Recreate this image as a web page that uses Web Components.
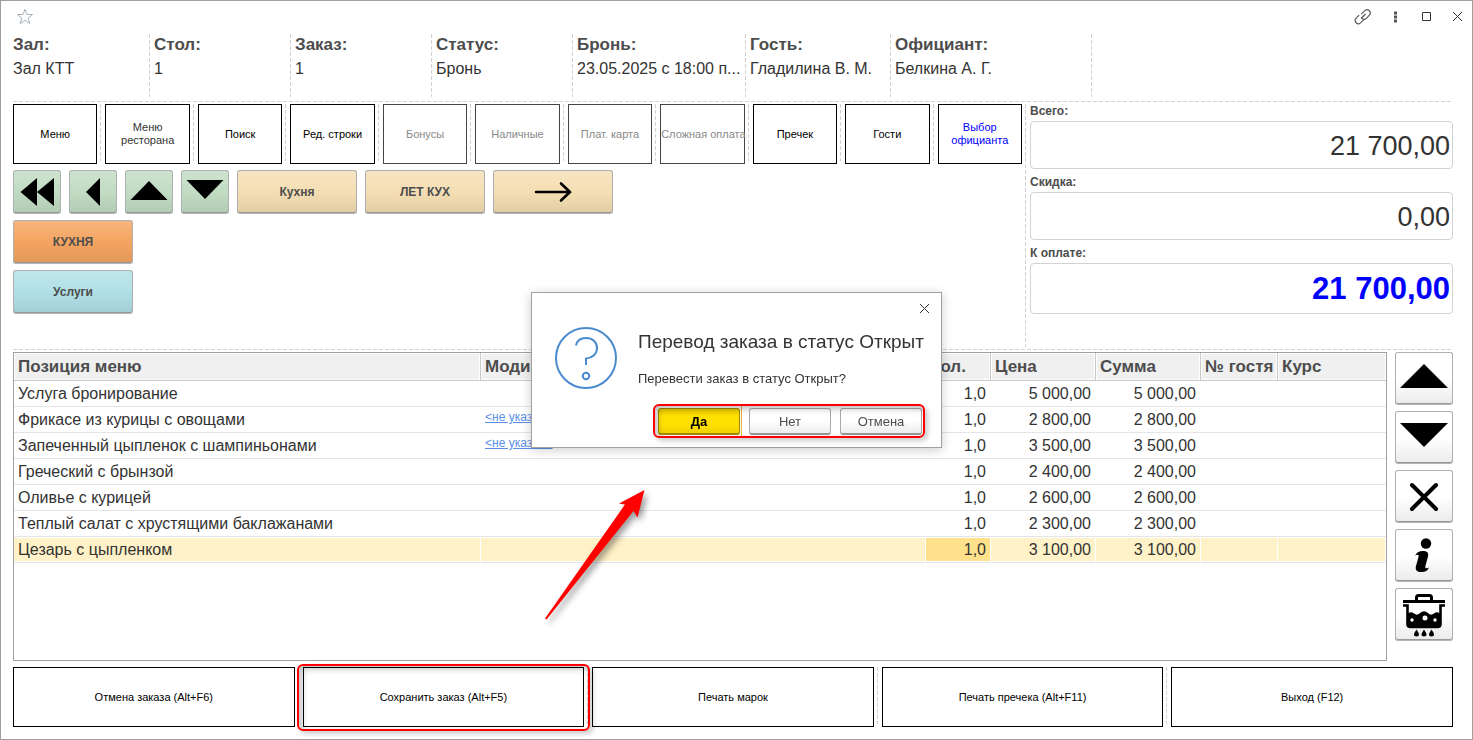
<!DOCTYPE html>
<html lang="ru">
<head>
<meta charset="utf-8">
<title>Заказ</title>
<style>
  html, body { height: 100%; }
  body { margin: 0; font-family: "Liberation Sans", Arial, sans-serif; font-size: 16px; color: #333; background: #fff; }
</style>
</head>
<body>
<order-window>
  <title-bar slot="title"></title-bar>
  <order-info slot="info">
    <info-cell label="Зал:">Зал КТТ</info-cell>
    <info-cell label="Стол:">1</info-cell>
    <info-cell label="Заказ:">1</info-cell>
    <info-cell label="Статус:">Бронь</info-cell>
    <info-cell label="Бронь:">23.05.2025 с 18:00 п...</info-cell>
    <info-cell label="Гость:">Гладилина В. М.</info-cell>
    <info-cell label="Официант:">Белкина А. Г.</info-cell>
  </order-info>
  <button-row slot="actions">
    <flat-button>Меню</flat-button>
    <flat-button tone="soft">Меню<br>ресторана</flat-button>
    <flat-button>Поиск</flat-button>
    <flat-button>Ред. строки</flat-button>
    <flat-button disabled>Бонусы</flat-button>
    <flat-button disabled>Наличные</flat-button>
    <flat-button disabled>Плат. карта</flat-button>
    <flat-button disabled>Сложная оплата</flat-button>
    <flat-button>Пречек</flat-button>
    <flat-button>Гости</flat-button>
    <flat-button tone="blue">Выбор<br>официанта</flat-button>
  </button-row>
  <menu-groups slot="groups"></menu-groups>
  <order-totals slot="totals">
    <total-field label="Всего:" value="21 700,00"></total-field>
    <total-field label="Скидка:" value="0,00"></total-field>
    <total-field label="К оплате:" value="21 700,00" due></total-field>
  </order-totals>
  <order-table slot="table"></order-table>
  <side-tools slot="tools"></side-tools>
  <button-row slot="footer">
    <flat-button>Отмена заказа (Alt+F6)</flat-button>
    <flat-button marked>Сохранить заказ (Alt+F5)</flat-button>
    <flat-button>Печать марок</flat-button>
    <flat-button>Печать пречека (Alt+F11)</flat-button>
    <flat-button>Выход (F12)</flat-button>
  </button-row>
</order-window>
<confirm-dialog heading="Перевод заказа в статус Открыт">Перевести заказ в статус Открыт?</confirm-dialog>

<script>
const define = (name, html, init) => {
  const template = document.createElement('template');
  template.innerHTML = html;
  customElements.define(name, class extends HTMLElement {
    constructor() {
      super();
      this.attachShadow({ mode: 'open' }).append(template.content.cloneNode(true));
      if (init) init(this, this.shadowRoot);
    }
  });
};
const dashV = 'repeating-linear-gradient(180deg, #d2d2d2 0 4px, transparent 4px 6px)';
const dashH = 'repeating-linear-gradient(90deg, #d2d2d2 0 4px, transparent 4px 6px)';

define('order-window', `
<style>
  :host { display: flex; flex-direction: column; box-sizing: border-box; min-height: 100%; border: 1px solid #a0a0a0; padding: 0 19px 12px 12px; }
  .upper { display: grid; grid-template-columns: 1013fr 427fr; background: ${dashH} 0 0 / 100% 1px no-repeat, ${dashH} 0 100% / 100% 1px no-repeat; padding: 3px 0; height: 243px; }
  .left { padding-right: 4px; background: ${dashV} 100% 0 / 1px 100% no-repeat; display: flex; flex-direction: column; gap: 6px; }
  .right { padding-left: 4px; }
  .lower { display: flex; gap: 8px; flex: 1; margin: 2px 0 6px; }
  .table { flex: 1; display: flex; min-width: 0; }
  ::slotted(order-table) { flex: 1; }
</style>
<slot name="title"></slot>
<slot name="info"></slot>
<div class="upper">
  <div class="left"><slot name="actions"></slot><slot name="groups"></slot></div>
  <div class="right"><slot name="totals"></slot></div>
</div>
<div class="lower"><div class="table"><slot name="table"></slot></div><slot name="tools"></slot></div>
<slot name="footer"></slot>`);

define('title-bar', `
<style>
  :host { display: flex; align-items: center; box-sizing: border-box; height: 33px; padding-bottom: 2px; margin-right: -15px; }
  button { display: block; border: 0; padding: 0; background: none; }
  svg { display: block; }
  .tools { margin-left: auto; display: flex; align-items: center; gap: 11px; }
</style>
<button aria-label="Избранное"><svg width="24" height="20" viewBox="0 0 24 20" fill="none" stroke="#a9b2b9"><path d="M12 2.200l2 5.300h5.600l-4.400 3.500 1.700 5.600-4.900-3.400-4.900 3.400 1.700-5.600L4.400 7.500H10z"/></svg></button>
<div class="tools">
  <button aria-label="Ссылка"><svg width="20" height="20" viewBox="0 0 20 20" fill="none" stroke="#555" stroke-width="1.100"><path d="M8.300 7.200l3.800-3.800a3.300 3.300 0 0 1 4.600 4.600l-3.300 3.300a3.300 3.300 0 0 1-4.400.2M11.200 12.300l-3.800 3.800a3.300 3.300 0 0 1-4.600-4.600L6.100 8.200M8 11.500l4.500-4.500"/></svg></button>
  <button aria-label="Ещё"><svg width="22" height="20" fill="#555"><path d="M10 4.500h3v3h-3zM10 8.500h3v3h-3zM10 12.500h3v3h-3z"/></svg></button>
  <button aria-label="Развернуть"><svg width="20" height="20" fill="none" stroke="#333"><path d="M5.500 5.500h8v8h-8z"/></svg></button>
  <button aria-label="Закрыть"><svg width="20" height="20" fill="none" stroke="#333"><path d="M5 5l9 9M14 5l-9 9"/></svg></button>
</div>`);

define('order-info', `
<style>
  :host { display: grid; grid-template-columns: 137fr 141fr 141fr 141fr 173fr 145fr 201fr 361fr; height: 63px; padding-bottom: 4px; }
</style>
<slot></slot>`);

define('info-cell', `
<style>
  :host { display: block; min-width: 0; padding-left: 4px; background: ${dashV} 100% 0 / 1px 100% no-repeat; }
  :host(:first-of-type) { padding-left: 0; }
  .name { font-weight: bold; font-size: 17px; line-height: 22px; color: #4d4d4d; }
  .value { line-height: 26px; white-space: nowrap; overflow: hidden; text-overflow: ellipsis; }
</style>
<div class="name"></div><div class="value"><slot></slot></div>`,
(host, root) => { root.querySelector('.name').textContent = host.getAttribute('label'); });

define('button-row', `
<style>
  :host { display: flex; gap: 8px; }
  ::slotted(*) { flex: 1 1 0; min-width: 0; }
</style>
<slot></slot>`);

define('flat-button', `
<style>
  :host { display: block; position: relative; height: 60px; }
  :host(:not(:first-of-type))::before { content: ""; position: absolute; left: -5px; top: 0; bottom: 3px; width: 1px; background: ${dashV}; }
  button { box-sizing: border-box; width: 100%; height: 100%; padding: 0; border: 1px solid #000; background: #fff; color: #000; font: 11px/13px "Liberation Sans", Arial, sans-serif; white-space: nowrap; }
  :host([tone=soft]) button { color: #333; }
  :host([tone=blue]) button { color: #00f; }
  :host([disabled]) button { color: #888; border-color: #444; }
  .mark { display: none; position: absolute; inset: -3px -6px -4px; border: 2px solid #f00; border-radius: 6px; box-shadow: 3px 3px 5px rgba(0,0,0,.2), inset 3px 3px 6px rgba(0,0,0,.25); pointer-events: none; }
  :host([marked]) { z-index: 1; }
  :host([marked]) .mark { display: block; }
</style>
<button type="button"><slot></slot></button><span class="mark"></span>`,
(host, root) => { root.querySelector('button').disabled = host.hasAttribute('disabled'); });

define('relief-button', `
<style>
  :host { display: block; }
  button { display: flex; align-items: center; justify-content: center; box-sizing: border-box; width: 100%; height: 100%; padding: 0; border: 1px solid #b0b0b0; border-bottom-color: #b4b4b4; border-radius: 3px; color: #4d4d4d; font: bold 12px/16px "Liberation Sans", Arial, sans-serif; box-shadow: inset 0 -1px #999;
    background: linear-gradient(rgba(255,255,255,.2), rgba(255,255,255,0) 50%, rgba(0,0,0,.08)) var(--tint, #fff); }
</style>
<button type="button"><slot></slot></button>`,
(host, root) => { if (host.title) root.querySelector('button').setAttribute('aria-label', host.title); });

define('menu-groups', `
<style>
  :host { display: grid; gap: 6px; }
  div { display: flex; gap: 8px; }
  relief-button { width: 120px; height: 44px; }
  .nav { width: 48px; --tint: #c1dcc3; }
  .sand { --tint: #f5deb3; }
  .orange { --tint: #f4a460; }
  .cyan { --tint: #b0e0e6; }
  svg { display: block; }
</style>
<div>
  <relief-button class="nav" title="В начало"><svg width="40" height="30"><path d="M20 1v28L3.500 15zM37 1v28L20 15z"/></svg></relief-button>
  <relief-button class="nav" title="Назад"><svg width="40" height="30"><path d="M27 1v28L13 15z"/></svg></relief-button>
  <relief-button class="nav" title="Вверх"><svg width="40" height="30"><path d="M1.500 23L20 4l18.500 19z"/></svg></relief-button>
  <relief-button class="nav" title="Вниз"><svg width="40" height="30"><path d="M1.500 3L20 22 38.500 3z"/></svg></relief-button>
  <relief-button class="sand">Кухня</relief-button>
  <relief-button class="sand">ЛЕТ КУХ</relief-button>
  <relief-button class="sand" title="Дальше"><svg width="40" height="24" fill="none" stroke="#000" stroke-width="2.600" stroke-linecap="round"><path d="M3 12h34M28 3.500l9 8.500-9 8.500"/></svg></relief-button>
</div>
<div><relief-button class="orange">КУХНЯ</relief-button></div>
<div><relief-button class="cyan">Услуги</relief-button></div>`);

define('order-totals', `<style>:host { display: grid; gap: 6px; }</style><slot></slot>`);

define('total-field', `
<style>
  :host { display: block; }
  label { display: block; font-weight: bold; font-size: 12px; line-height: 14px; height: 17px; color: #4d4d4d; }
  input { display: block; box-sizing: border-box; width: 100%; height: 48px; padding: 2px 2px 0; border: 1px solid #d2d2d2; border-radius: 4px; background: #fff; color: #333; font: 27px "Liberation Sans", Arial, sans-serif; text-align: right; outline: 0; }
  :host([due]) input { height: 51px; padding-top: 0; font-size: 31px; font-weight: bold; color: #00f; }
</style>
<label for="field"></label><input id="field" readonly>`,
(host, root) => {
  root.querySelector('label').textContent = host.getAttribute('label');
  root.querySelector('input').value = host.getAttribute('value');
});

define('order-table', `
<style>
  :host { display: block; border: 1px solid #a0a0a0; box-sizing: border-box; }
  table { width: 100%; table-layout: fixed; border-collapse: separate; border-spacing: 0; }
  th, td { box-sizing: border-box; padding: 0 5px 0 4px; white-space: nowrap; overflow: hidden; }
  th { height: 28px; padding-right: 0; text-align: left; font-size: 17px; line-height: 26px; color: #4d4d4d; background: #f0f0f0; border-right: 1px solid #c8c8c8; border-bottom: 1px solid #c8c8c8; box-shadow: inset 0 0 0 1px #fff; }
  th:last-child { border-right: 0; }
  td { height: 26px; padding-top: 1px; line-height: 24px; border-bottom: 1px solid #e5e5e5; }
  td:nth-child(n+3) { text-align: right; }
  td a { display: inline-block; font-size: 12px; line-height: 14px; color: #5b8fe8; vertical-align: 4px; }
  tr.current td { background: #fff2c8; border-right: 1px solid #fff; box-shadow: inset 0 1px #fff, inset 0 -1px #fff; padding-right: 4px; }
  tr.current td:nth-child(3) { background: #ffe18c; }
  .name { width: 467px; } .qty { width: 65px; } .sum { width: 105px; } .guest { width: 77px; } .course { width: 108px; }
</style>
<table>
  <colgroup><col class="name"><col><col class="qty"><col class="sum"><col class="sum"><col class="guest"><col class="course"></colgroup>
  <thead><tr><th>Позиция меню</th><th>Модификаторы</th><th>Кол.</th><th>Цена</th><th>Сумма</th><th>№ гостя</th><th>Курс</th></tr></thead>
  <tbody></tbody>
</table>`,
(host, root) => {
  const rows = [
    ['Услуга бронирование', '5 000,00'],
    ['Фрикасе из курицы с овощами', '2 800,00', true],
    ['Запеченный цыпленок с шампиньонами', '3 500,00', true],
    ['Греческий с брынзой', '2 400,00'],
    ['Оливье с курицей', '2 600,00'],
    ['Теплый салат с хрустящими баклажанами', '2 300,00'],
    ['Цезарь с цыпленком', '3 100,00']
  ];
  root.querySelector('tbody').innerHTML = rows.map(([name, price, mods], i) =>
    `<tr${i === rows.length - 1 ? ' class="current"' : ''}><td>${name}</td><td>${mods ? '<a href="#">&lt;не указан&gt;</a>' : ''}</td><td>1,0</td><td>${price}</td><td>${price}</td><td></td><td></td></tr>`).join('');
});

define('side-tools', `
<style>
  :host { display: flex; flex-direction: column; gap: 6px; width: 58px; }
  relief-button { height: 53px; --tint: #fff; }
  svg { display: block; }
</style>
<relief-button title="Вверх"><svg width="50" height="44"><path d="M1 31L25 7l24 24z"/></svg></relief-button>
<relief-button title="Вниз"><svg width="50" height="44"><path d="M1 7l24 24L49 7z"/></svg></relief-button>
<relief-button title="Удалить"><svg width="50" height="44" stroke="#000" stroke-width="4" stroke-linecap="round"><path d="M13 10l24 24M37 10L13 34"/></svg></relief-button>
<relief-button title="Информация"><svg width="50" height="44"><circle cx="27" cy="9.500" r="5.200"/><path d="M16 22c1.500-3.500 4-5 7.500-5 4.500 0 6.500 1.500 5.500 5.500l-2.600 9.500c-.4 1.600.2 2.300 1.200 2.300.8 0 1.400-.3 2.400-.8-1.200 3-3.800 4.500-7.500 4.500-4.500 0-6.600-1.800-5.500-6l2.500-9c.4-1.500 0-2.200-1-2.200-.9 0-1.600.5-2.500 1.200z"/></svg></relief-button>
<relief-button title="Кухня"><svg width="50" height="44"><g fill="none" stroke="#000" stroke-width="3"><path d="M17.500 8V4.500q0-2 2-2h11q2 0 2 2V8M4 8.500h42"/><path d="M4 12.500h4.500V31q0 3 3 3h27q3 0 3-3V12.500H46" stroke-width="2.600"/></g><path d="M8 21q4-3 7-.5 3 2.500 6-.5 4-3.500 8 0 3 3 6 .5 3-2.500 7 .5v10q0 3-3 3H11q-3 0-3-3z"/><g fill="#fff"><circle cx="13" cy="27" r="1.700"/><circle cx="26" cy="25" r="2.500"/><circle cx="36" cy="27" r="1.700"/></g><path d="M17.500 36.500q5 7 0 7t0-7zM25 36.500q5 7 0 7t0-7zM32.500 36.500q5 7 0 7t0-7z"/></svg></relief-button>`);

define('confirm-dialog', `
<style>
  :host { position: fixed; inset: 0; z-index: 2; display: flex; align-items: center; justify-content: center; pointer-events: none; }
  section { position: relative; box-sizing: border-box; width: 411px; padding: 34px 19px 12px 23px; border: 1px solid #a0a0a0; background: #fff; box-shadow: 0 2px 10px rgba(0,0,0,.2); pointer-events: auto; }
  .body { display: grid; grid-template-columns: 62px 1fr; column-gap: 21px; }
  svg { display: block; }
  h1 { margin: 0; font-weight: normal; font-size: 19px; line-height: 30px; color: #333; white-space: nowrap; }
  p { margin: 14px 0 0; font-size: 13px; line-height: 16px; color: #333; }
  .close { position: absolute; top: 10px; right: 10px; width: 12px; height: 12px; padding: 0; border: 0; background: none; }
  .buttons { position: relative; display: flex; justify-content: flex-end; gap: 9px; margin-top: 19px; }
  .buttons button { box-sizing: border-box; width: 82px; height: 27px; padding: 0; border: 1px solid #aaa; border-bottom: 2px solid #999; border-radius: 3px; background: linear-gradient(#fff 50%, #ededed); color: #4d4d4d; font: 13px "Liberation Sans", Arial, sans-serif; }
  .buttons button.yes { border-color: #a18b00; background: linear-gradient(#e6cc00, #ffe000 30%, #ffe000 70%, #ecd000); color: #000; font-weight: bold; }
  .yes + i { position: absolute; left: 186px; top: -3px; bottom: -2px; width: 1px; background: #e8b53c; }
  .mark { position: absolute; inset: -4px -3px -3px 98px; border: 2px solid #f00; border-radius: 6px; box-shadow: 3px 3px 5px rgba(0,0,0,.2), inset 3px 3px 6px rgba(0,0,0,.25); pointer-events: none; }
  .pointer { position: absolute; left: 12px; top: 196px; filter: drop-shadow(3px 4px 3px rgba(0,0,0,.4)); }
</style>
<section role="dialog" aria-labelledby="heading">
  <button class="close" aria-label="Закрыть"><svg width="12" height="12" stroke="#333"><path d="M1 1l9 9M10 1l-9 9"/></svg></button>
  <div class="body">
    <svg width="62" height="62" fill="none" stroke="#4a8bd0" stroke-width="2"><circle cx="31" cy="31" r="30"/><path d="M21 18.500c1-5 5-7.500 10-7.500 6.500 0 11 4 11 10s-4.500 10-11 10.500V38"/><circle cx="31" cy="49" r="3.200"/></svg>
    <div><h1 id="heading"></h1><p><slot></slot></p></div>
  </div>
  <div class="buttons">
    <button class="yes">Да</button><i></i><button>Нет</button><button>Отмена</button>
    <span class="mark"></span>
  </div>
  <svg class="pointer" width="102" height="132" fill="#f00"><path d="M100.500 1L75 14.500l6 1L1 129.500l1.500 1L89.500 22l4 6.500z"/></svg>
</section>`,
(host, root) => { root.querySelector('h1').textContent = host.getAttribute('heading'); });
</script>
</body>
</html>
